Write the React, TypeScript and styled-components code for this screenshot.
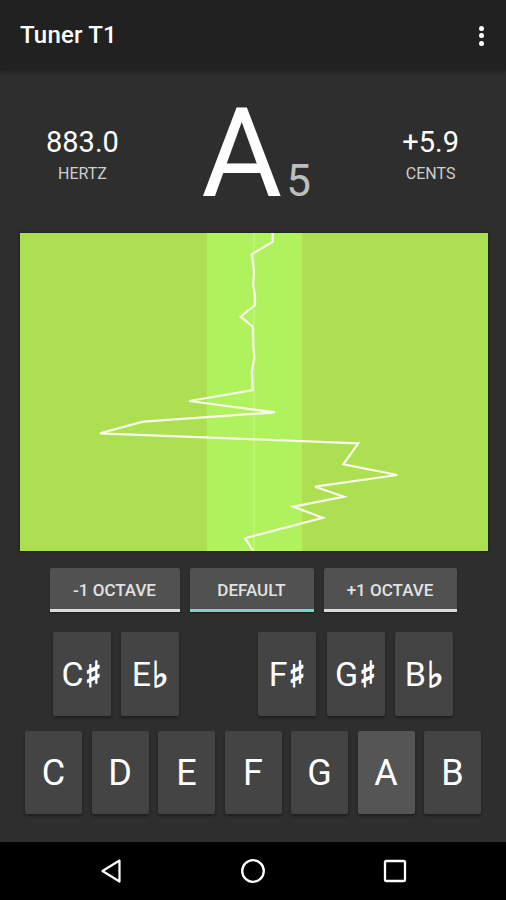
import React from "react";
import styled, { createGlobalStyle } from "styled-components";

const GlobalStyle = createGlobalStyle`
  html, body { margin: 0; padding: 0; background: #2e2e2e; }
  body { font-family: Roboto, "DejaVu Sans", sans-serif; }
  * { box-sizing: border-box; }
`;

const Screen = styled.div`
  width: 506px;
  height: 900px;
  display: flex;
  flex-direction: column;
  background: #2e2e2e;
  overflow: hidden;
`;

const Toolbar = styled.header`
  height: 70px;
  flex: none;
  background: #212121;
  display: flex;
  align-items: center;
  justify-content: space-between;
  padding: 0 22px 0 20px;
  box-shadow: 0 2px 4px rgba(0, 0, 0, 0.3);
`;

const Title = styled.h1`
  margin: 0;
  font-family: Roboto, sans-serif;
  font-weight: 500;
  font-size: 24px;
  color: #ffffff;
  letter-spacing: 0.2px;
`;

const Kebab = styled.div`
  display: flex;
  flex-direction: column;
  gap: 2.5px;
  padding-top: 1px;
`;

const Dot = styled.span`
  width: 5px;
  height: 5px;
  border-radius: 50%;
  background: #ffffff;
`;

const Main = styled.main`
  flex: 1;
  display: flex;
  flex-direction: column;
  align-items: center;
`;

const Readout = styled.section`
  width: 100%;
  height: 163px;
  display: flex;
  align-items: center;
  justify-content: space-between;
  padding: 5px 47px 0 46px;
`;

const Stat = styled.div`
  display: flex;
  flex-direction: column;
  align-items: center;
`;

const StatValue = styled.div`
  font-size: 29px;
  line-height: 34px;
  color: #ffffff;
`;

const StatLabel = styled.div`
  font-size: 16px;
  line-height: 20px;
  margin-top: 5px;
  color: #cfcfcf;
`;

const Note = styled.div`
  display: flex;
  align-items: baseline;
  margin-right: 9px;
`;

const NoteName = styled.span`
  font-size: 124px;
  line-height: 122px;
  color: #ffffff;
`;

const Octave = styled.span`
  font-size: 44px;
  line-height: 44px;
  margin-left: 4px;
  color: #bdbdbd;
`;

const GraphBox = styled.div`
  width: 468px;
  height: 318px;
  margin-left: 1px;
  background: #ace052;
  box-shadow: 0 0 3px rgba(0, 0, 0, 0.5);
  svg { display: block; }
`;

const OctaveRow = styled.div`
  display: flex;
  gap: 10px;
  margin-top: 17px;
`;

const OctaveButton = styled.button<{ $w: number; $active?: boolean }>`
  width: ${(p) => p.$w}px;
  height: 44px;
  border: none;
  border-radius: 2px 2px 0 0;
  background: #515151;
  border-bottom: 3px solid ${(p) => (p.$active ? "#7ed3c9" : "#dcdcdc")};
  color: #e2e2e2;
  font-family: Roboto, sans-serif;
  font-weight: 500;
  font-size: 17px;
  padding: 3px 0 0;
  box-shadow: 0 1px 2px rgba(0, 0, 0, 0.4);
`;

const KeyRow = styled.div<{ $cols: number; $w: number; $gap: number; $top: number; $h: number }>`
  display: grid;
  grid-template-columns: repeat(${(p) => p.$cols}, ${(p) => p.$w}px);
  grid-auto-rows: ${(p) => p.$h}px;
  column-gap: ${(p) => p.$gap}px;
  margin-top: ${(p) => p.$top}px;
`;

const Key = styled.div<{ $active?: boolean; $size: number }>`
  display: flex;
  align-items: center;
  justify-content: center;
  border-radius: 2px;
  background: ${(p) => (p.$active ? "#555555" : "#444444")};
  color: #ffffff;
  font-family: Roboto, "DejaVu Sans", sans-serif;
  font-size: ${(p) => p.$size}px;
  box-shadow: 0 2px 3px rgba(0, 0, 0, 0.35);
`;

const Accidental = styled.span`
  font-family: "DejaVu Sans", sans-serif;
  font-size: 1.05em;
  -webkit-text-stroke: 1.1px #ffffff;
  margin-left: 1px;
`;

const Spacer = styled.div``;

const NavBar = styled.nav`
  height: 58px;
  flex: none;
  background: #000000;
  display: flex;
  justify-content: center;
  align-items: center;
`;

const NavItem = styled.div`
  width: 142px;
  display: flex;
  justify-content: center;
  align-items: center;
  svg { display: block; }
`;

const wave: [number, number][] = [
  [252.7, 0], [252.7, 8.7], [231.7, 21.3], [233, 30], [234, 40], [233, 52], [235, 62],
  [235, 72], [220.7, 83.7], [232.7, 93.7], [233.3, 112], [234.3, 125], [231.7, 138.7],
  [232.7, 157], [169.3, 168], [255, 179.3], [123.3, 188.7], [80, 200.3], [338.3, 210.3],
  [323.3, 231.3], [377.3, 242], [295, 253.7], [324, 263.7], [273.3, 273.7], [302.7, 284.7],
  [225, 305.3], [233.3, 318],
];

const Graph = () => (
  <GraphBox>
    <svg width="468" height="318" viewBox="0 0 468 318">
      <rect x="187" y="0" width="95" height="318" fill="#b0f25d" />
      <line x1="234" y1="0" x2="234" y2="318" stroke="#c3f77a" strokeWidth="1.5" />
      <polyline
        points={wave.map((p) => p.join(",")).join(" ")}
        fill="none"
        stroke="#fbfbe9"
        strokeWidth="2.2"
        strokeLinejoin="miter"
      />
    </svg>
  </GraphBox>
);

const sharps: (null | [string, string])[] = [
  ["C", "♯"], ["E", "♭"], null, ["F", "♯"], ["G", "♯"], ["B", "♭"],
];
const naturals = ["C", "D", "E", "F", "G", "A", "B"];

export default function App() {
  return (
    <>
      <GlobalStyle />
      <Screen>
        <Toolbar>
          <Title>Tuner T1</Title>
          <Kebab>
            <Dot />
            <Dot />
            <Dot />
          </Kebab>
        </Toolbar>
        <Main>
          <Readout>
            <Stat>
              <StatValue>883.0</StatValue>
              <StatLabel>HERTZ</StatLabel>
            </Stat>
            <Note>
              <NoteName>A</NoteName>
              <Octave>5</Octave>
            </Note>
            <Stat>
              <StatValue>+5.9</StatValue>
              <StatLabel>CENTS</StatLabel>
            </Stat>
          </Readout>
          <Graph />
          <OctaveRow>
            <OctaveButton $w={130}>-1 OCTAVE</OctaveButton>
            <OctaveButton $w={124} $active>DEFAULT</OctaveButton>
            <OctaveButton $w={133}>+1 OCTAVE</OctaveButton>
          </OctaveRow>
          <KeyRow $cols={6} $w={58} $gap={10.5} $top={20} $h={84}>
            {sharps.map((s, i) =>
              s ? (
                <Key key={i} $size={34}>
                  {s[0]}
                  <Accidental>{s[1]}</Accidental>
                </Key>
              ) : (
                <Spacer key={i} />
              )
            )}
          </KeyRow>
          <KeyRow $cols={7} $w={57} $gap={9.5} $top={15} $h={83}>
            {naturals.map((n) => (
              <Key key={n} $size={36} $active={n === "A"}>
                {n}
              </Key>
            ))}
          </KeyRow>
        </Main>
        <NavBar>
          <NavItem>
            <svg width="24" height="26" viewBox="0 0 24 26">
              <path d="M20.5 2.5 L3.5 13 L20.5 23.5 Z" fill="none" stroke="#fff" strokeWidth="2.2" strokeLinejoin="round" />
            </svg>
          </NavItem>
          <NavItem>
            <svg width="26" height="26" viewBox="0 0 26 26">
              <circle cx="13" cy="13" r="10.8" fill="none" stroke="#fff" strokeWidth="2.3" />
            </svg>
          </NavItem>
          <NavItem>
            <svg width="24" height="24" viewBox="0 0 24 24">
              <rect x="2" y="2" width="20" height="20" rx="1.5" fill="none" stroke="#fff" strokeWidth="2.3" />
            </svg>
          </NavItem>
        </NavBar>
      </Screen>
    </>
  );
}
